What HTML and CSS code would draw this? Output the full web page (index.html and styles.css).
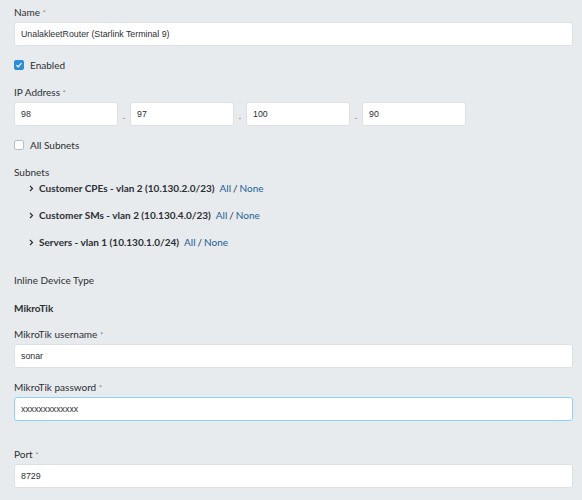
FILE: index.html
```html
<!DOCTYPE html>
<html lang="en">
<head>
    <meta charset="UTF-8">
    <title>Inline Device</title>
    <link rel="stylesheet" href="styles.css">
</head>
<body>
    <form class="form">
        <div class="field">
            <label>Name <span class="req">*</span></label>
            <input class="input" type="text" value="UnalakleetRouter (Starlink Terminal 9)">
        </div>

        <div class="check check-enabled">
            <span class="box checked">
                <svg width="8" height="8" viewBox="0 0 8 8"><path d="M1.5 4.2 L3.2 5.8 L6.5 2.2" fill="none" stroke="#fff" stroke-width="1.2"/></svg>
            </span>
            Enabled
        </div>

        <div class="field field-ip">
            <label>IP Address <span class="req">*</span></label>
            <div class="ip">
                <input class="input ip-part" type="text" value="98">
                <span class="dot">.</span>
                <input class="input ip-part" type="text" value="97">
                <span class="dot">.</span>
                <input class="input ip-part" type="text" value="100">
                <span class="dot">.</span>
                <input class="input ip-part" type="text" value="90">
            </div>
        </div>

        <div class="check check-subnets">
            <span class="box"></span>
            All Subnets
        </div>

        <div class="subnets">
            <div class="subnets-title">Subnets</div>
            <div class="subnet">
                <svg class="chev" width="5" height="7" viewBox="0 0 5 7"><path d="M1 1 L3.5 3.5 L1 6" fill="none" stroke="#2c2f33" stroke-width="1.2"/></svg>
                <span class="subnet-name">Customer CPEs - vlan 2 (10.130.2.0/23)</span>
                <a href="#">All</a> / <a href="#">None</a>
            </div>
            <div class="subnet">
                <svg class="chev" width="5" height="7" viewBox="0 0 5 7"><path d="M1 1 L3.5 3.5 L1 6" fill="none" stroke="#2c2f33" stroke-width="1.2"/></svg>
                <span class="subnet-name">Customer SMs - vlan 2 (10.130.4.0/23)</span>
                <a href="#">All</a> / <a href="#">None</a>
            </div>
            <div class="subnet">
                <svg class="chev" width="5" height="7" viewBox="0 0 5 7"><path d="M1 1 L3.5 3.5 L1 6" fill="none" stroke="#2c2f33" stroke-width="1.2"/></svg>
                <span class="subnet-name">Servers - vlan 1 (10.130.1.0/24)</span>
                <a href="#">All</a> / <a href="#">None</a>
            </div>
        </div>

        <div class="device-type">Inline Device Type</div>
        <div class="device-name">MikroTik</div>

        <div class="field field-user">
            <label>MikroTik username <span class="req">*</span></label>
            <input class="input" type="text" value="sonar">
        </div>

        <div class="field field-pass">
            <label>MikroTik password <span class="req">*</span></label>
            <input class="input focused" type="text" value="xxxxxxxxxxxxx">
        </div>

        <div class="field field-port">
            <label>Port <span class="req">*</span></label>
            <input class="input" type="text" value="8729">
        </div>
    </form>
</body>
</html>
```

FILE: styles.css
```css
body {
    margin: 0;
    padding: 5px 0 0 14px;
    background: #e8ebee;
    font-family: Lato, "Noto Sans", sans-serif;
    font-size: 10px;
    color: #2c2f33;
}
.form {
    width: 559px;
}
.field label {
    display: block;
    height: 14px;
    line-height: 14px;
    margin-bottom: 3px;
}
.req {
    color: #8a9096;
    font-size: 8px;
    line-height: 1;
}
.input {
    display: block;
    box-sizing: border-box;
    width: 100%;
    height: 24px;
    margin: 0;
    padding: 0 6px;
    border: 1px solid #dde1e5;
    border-radius: 3px;
    background: #fff;
    font-family: "Liberation Sans", Arial, sans-serif;
    font-size: 8.8px;
    color: #2c2f33;
    outline: none;
}
.focused {
    border-color: #8dd3f7;
}
.check {
    display: flex;
    align-items: center;
    gap: 6px;
    height: 14px;
    line-height: 14px;
}
.check-enabled {
    margin-top: 12px;
}
.check-subnets {
    margin-top: 12px;
}
.box {
    box-sizing: border-box;
    width: 10px;
    height: 10px;
    border: 1px solid #b9bfc5;
    border-radius: 2px;
    background: #fff;
    display: flex;
    align-items: center;
    justify-content: center;
}
.box.checked {
    background: #2b8ed6;
    border-color: #2b8ed6;
}
.field-ip {
    margin-top: 13px;
}
.ip {
    display: flex;
    width: 452px;
    height: 24px;
}
.ip-part {
    width: 104px;
    flex: none;
}
.dot {
    width: 12px;
    text-align: center;
    line-height: 26px;
    height: 24px;
    color: #6b7177;
}
.subnets {
    margin-top: 13px;
}
.subnets-title {
    height: 14px;
    line-height: 14px;
}
.subnet {
    display: flex;
    align-items: center;
    height: 14px;
    line-height: 14px;
    margin-top: 13px;
    padding-left: 15px;
}
.subnets-title + .subnet {
    margin-top: 2px;
}
.chev {
    margin-right: 5px;
}
.subnet-name {
    font-weight: 700;
    margin-right: 3px;
}
.subnet a {
    color: #1b5e96;
    text-decoration: none;
    margin: 0 2px;
}
.device-type {
    margin-top: 24px;
    height: 14px;
    line-height: 14px;
}
.device-name {
    margin-top: 14px;
    height: 14px;
    line-height: 14px;
    font-weight: 700;
}
.field-user {
    margin-top: 12px;
}
.field-pass {
    margin-top: 12px;
}
.field-port {
    margin-top: 26px;
}
```
